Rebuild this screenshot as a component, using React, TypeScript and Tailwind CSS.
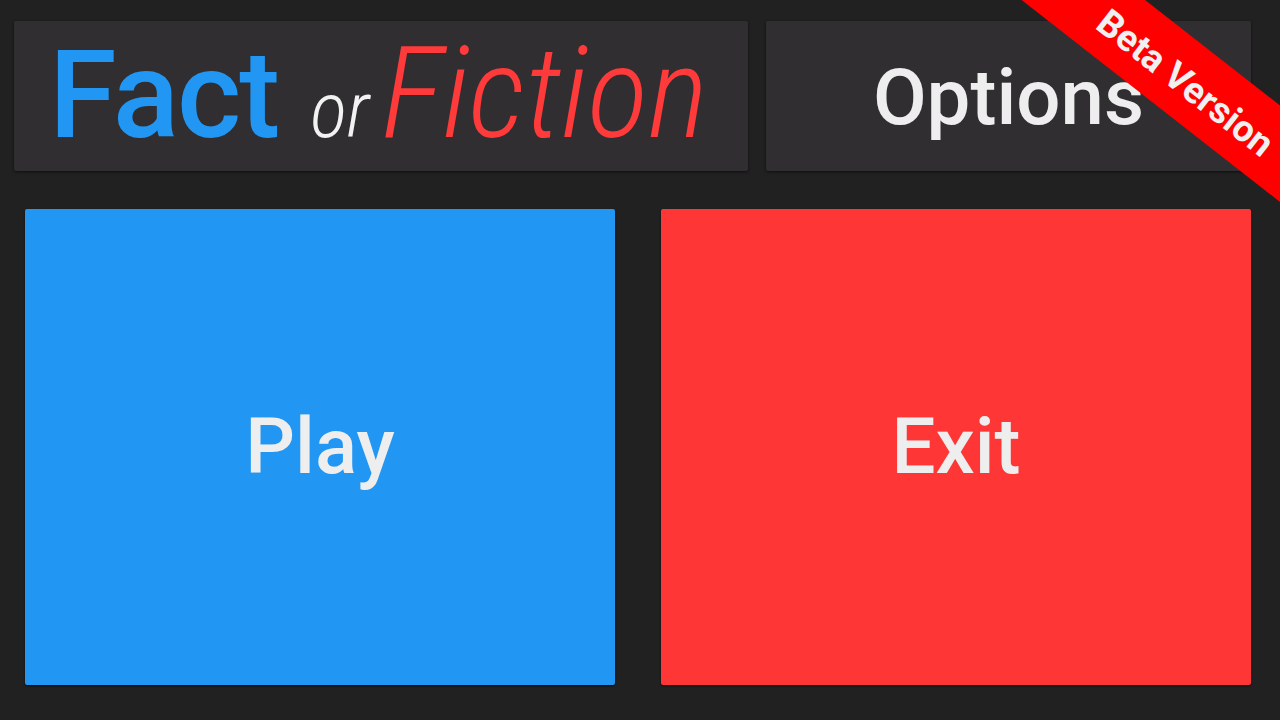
export default function App() {
  return (
    <div
      className="relative w-[1280px] h-[720px] overflow-hidden bg-[#212121]"
      style={{ fontFamily: "Roboto, 'Noto Sans', sans-serif" }}
    >
      <div className="flex pt-[21px] pl-[14px] gap-[18px]">
        <div className="w-[734px] h-[150px] bg-[#302e30] rounded-[2px] shadow-[0_1px_3px_rgba(0,0,0,0.6)] flex items-baseline justify-start pl-[35px] pt-[8px] leading-none">
          <span className="text-[#2196f3] font-medium text-[123px] tracking-[-2px]">Fact</span>
          <span className="text-[#f2f2f2] italic font-light text-[77px] font-stretch-condensed ml-[32px]">or</span>
          <span className="text-[#fe3a3a] italic font-light text-[128px] font-stretch-condensed ml-[12px]">Fiction</span>
        </div>
        <div className="w-[485px] h-[150px] bg-[#302e30] rounded-[2px] shadow-[0_1px_3px_rgba(0,0,0,0.6)] flex items-center justify-center pt-[3px]">
          <span className="text-[#eeeeee] font-medium text-[78px] leading-none">Options</span>
        </div>
      </div>
      <div className="flex pt-[38px] pl-[25px] gap-[46px]">
        <button className="w-[590px] h-[476px] bg-[#2196f3] rounded-[2px] shadow-[0_1px_2px_rgba(0,0,0,0.7)] flex items-center justify-center">
          <span className="text-[#eeeeee] font-medium text-[78px] leading-none">Play</span>
        </button>
        <button className="w-[590px] h-[476px] bg-[#fe3636] rounded-[2px] shadow-[0_1px_2px_rgba(0,0,0,0.7)] flex items-center justify-center">
          <span className="text-[#eeeeee] font-medium text-[78px] leading-none">Exit</span>
        </button>
      </div>
      <div className="absolute left-[937px] top-[43px] w-[500px] h-[76px] bg-[#ff0000] rotate-[38deg] flex items-center justify-center">
        <span className="text-[#f0f0f0] font-bold text-[37px] leading-none pt-[4px]">Beta Version</span>
      </div>
    </div>
  );
}
